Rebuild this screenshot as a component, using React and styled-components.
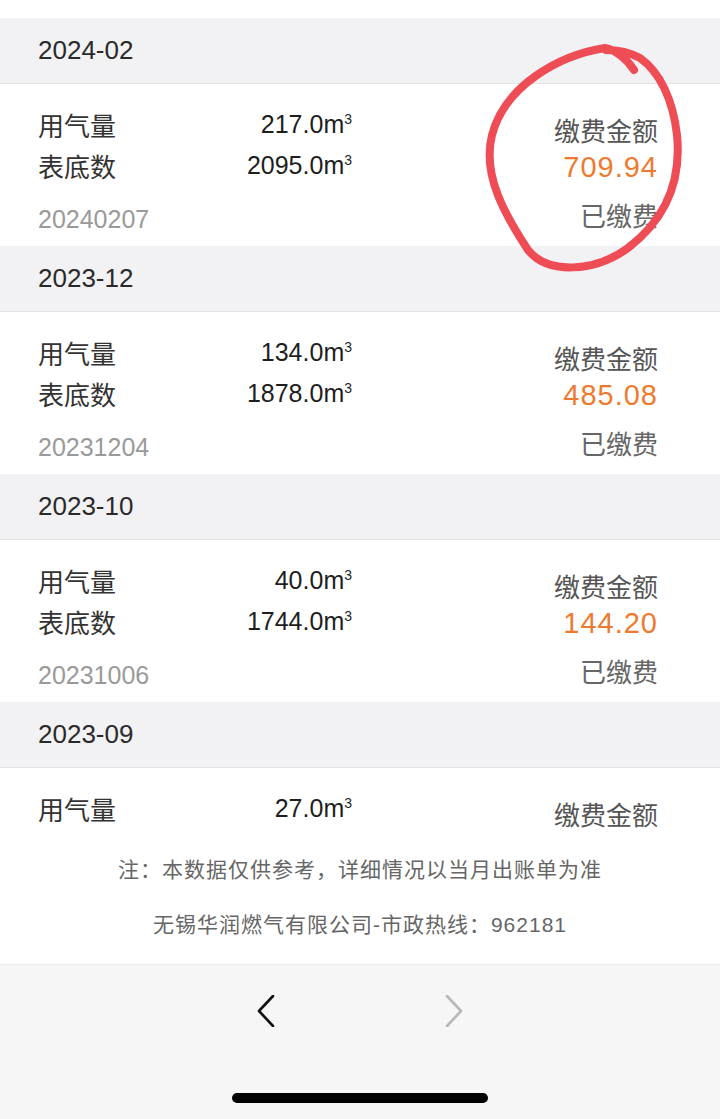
import React from 'react';
import styled, { createGlobalStyle } from 'styled-components';

const GlobalStyle = createGlobalStyle`
  html, body {
    margin: 0;
    padding: 0;
    background: #ffffff;
  }
  body {
    font-family: "Liberation Sans", "Noto Sans CJK SC", sans-serif;
    color: #333;
  }
`;

const records = [
  { month: '2024-02', gas: '217.0', meter: '2095.0', date: '20240207', amount: '709.94' },
  { month: '2023-12', gas: '134.0', meter: '1878.0', date: '20231204', amount: '485.08' },
  { month: '2023-10', gas: '40.0', meter: '1744.0', date: '20231006', amount: '144.20' },
  { month: '2023-09', gas: '27.0', partial: true },
];

const Page = styled.div`
  position: relative;
  width: 720px;
  height: 1119px;
  overflow: hidden;
  display: flex;
  flex-direction: column;
  background: #fff;
`;

const TopGap = styled.div`
  height: 18px;
  flex-shrink: 0;
`;

const List = styled.div`
  height: 820px;
  overflow: hidden;
  flex-shrink: 0;
`;

const MonthHeader = styled.div`
  height: 65px;
  border-bottom: 1px solid #e4e4e6;
  background: #f2f2f4;
  display: flex;
  align-items: center;
  padding-left: 38px;
  font-size: 26px;
  color: #2a2a2a;
`;

const Card = styled.div`
  height: ${(p) => (p.partial ? 70 : 162)}px;
  box-sizing: border-box;
  display: flex;
  padding: 0 62px 0 38px;
  background: #fff;
`;

const LeftCol = styled.div`
  width: 314px;
  padding-top: 20px;
`;

const Row = styled.div`
  display: flex;
  justify-content: space-between;
  align-items: center;
  height: 41px;
`;

const Label = styled.span`
  font-size: 26px;
  color: #333;
`;

const Value = styled.span`
  font-size: 25px;
  color: #1e1e1e;
`;

const Sup = styled.sup`
  font-size: 14px;
  vertical-align: 9px;
  line-height: 0;
`;

const DateText = styled.div`
  margin-top: 13px;
  line-height: 40px;
  font-size: 25px;
  color: #9a9a9a;
`;

const RightCol = styled.div`
  flex: 1;
  padding-top: 31px;
  display: flex;
  flex-direction: column;
  align-items: flex-end;
`;

const RightLine = styled.div`
  line-height: 35px;
  font-size: ${(p) => p.size || 26}px;
  color: ${(p) => p.color || '#555'};
  letter-spacing: ${(p) => p.spacing || 0}px;
  margin-top: ${(p) => p.gap || 0}px;
`;

const Footer = styled.div`
  height: 126px;
  flex-shrink: 0;
  display: flex;
  flex-direction: column;
  align-items: center;
  padding-top: 16px;
  box-sizing: border-box;
`;

const Note = styled.div`
  font-size: 21px;
  letter-spacing: 1px;
  color: #666;
  line-height: 32px;
  margin-bottom: ${(p) => p.gap || 0}px;
`;

const NavBar = styled.div`
  flex: 1;
  background: #f6f6f6;
  border-top: 1px solid #ebebeb;
  display: flex;
  flex-direction: column;
  align-items: center;
`;

const NavButtons = styled.div`
  display: flex;
  gap: 170px;
  margin-top: 30px;
  height: 32px;
`;

const HomeIndicator = styled.div`
  margin-top: 66px;
  width: 256px;
  height: 10px;
  border-radius: 5px;
  background: #000;
`;

const Annotation = styled.svg`
  position: absolute;
  top: 0;
  left: 0;
  pointer-events: none;
`;

function Chevron({ dir, color }) {
  const d = dir === 'left' ? 'M16 1 L2 16 L16 31' : 'M2 1 L16 16 L2 31';
  return (
    <svg width="18" height="32" viewBox="0 0 18 32">
      <path d={d} fill="none" stroke={color} strokeWidth="2.6" strokeLinecap="round" strokeLinejoin="round" />
    </svg>
  );
}

function Record({ r }) {
  return (
    <>
      <MonthHeader>{r.month}</MonthHeader>
      <Card partial={r.partial}>
        <LeftCol>
          <Row>
            <Label>用气量</Label>
            <Value>{r.gas}m<Sup>3</Sup></Value>
          </Row>
          {!r.partial && (
            <>
              <Row>
                <Label>表底数</Label>
                <Value>{r.meter}m<Sup>3</Sup></Value>
              </Row>
              <DateText>{r.date}</DateText>
            </>
          )}
        </LeftCol>
        <RightCol>
          <RightLine>缴费金额</RightLine>
          {!r.partial && (
            <>
              <RightLine size={29} spacing={1} color="#ee7a2f">{r.amount}</RightLine>
              <RightLine color="#666" gap={15}>已缴费</RightLine>
            </>
          )}
        </RightCol>
      </Card>
    </>
  );
}

export default function App() {
  return (
    <>
      <GlobalStyle />
      <Page>
        <TopGap />
        <List>
          {records.map((r) => (
            <Record key={r.month} r={r} />
          ))}
        </List>
        <Footer>
          <Note gap={23}>注：本数据仅供参考，详细情况以当月出账单为准</Note>
          <Note>无锡华润燃气有限公司-市政热线：962181</Note>
        </Footer>
        <NavBar>
          <NavButtons>
            <Chevron dir="left" color="#111" />
            <Chevron dir="right" color="#b8b8b8" />
          </NavButtons>
          <HomeIndicator />
        </NavBar>
        <Annotation width="720" height="300" viewBox="0 0 720 300">
          <path
            d="M 634 70 Q 622 52 605 48 C 560 55 505 85 492 135 C 482 175 505 215 528 250 C 548 275 595 272 628 248 C 662 222 682 185 677 135 C 673 100 660 72 640 58 Q 625 50 606 50"
            fill="none"
            stroke="#ef4d56"
            strokeWidth="8"
            strokeLinecap="round"
            strokeLinejoin="round"
          />
        </Annotation>
      </Page>
    </>
  );
}
